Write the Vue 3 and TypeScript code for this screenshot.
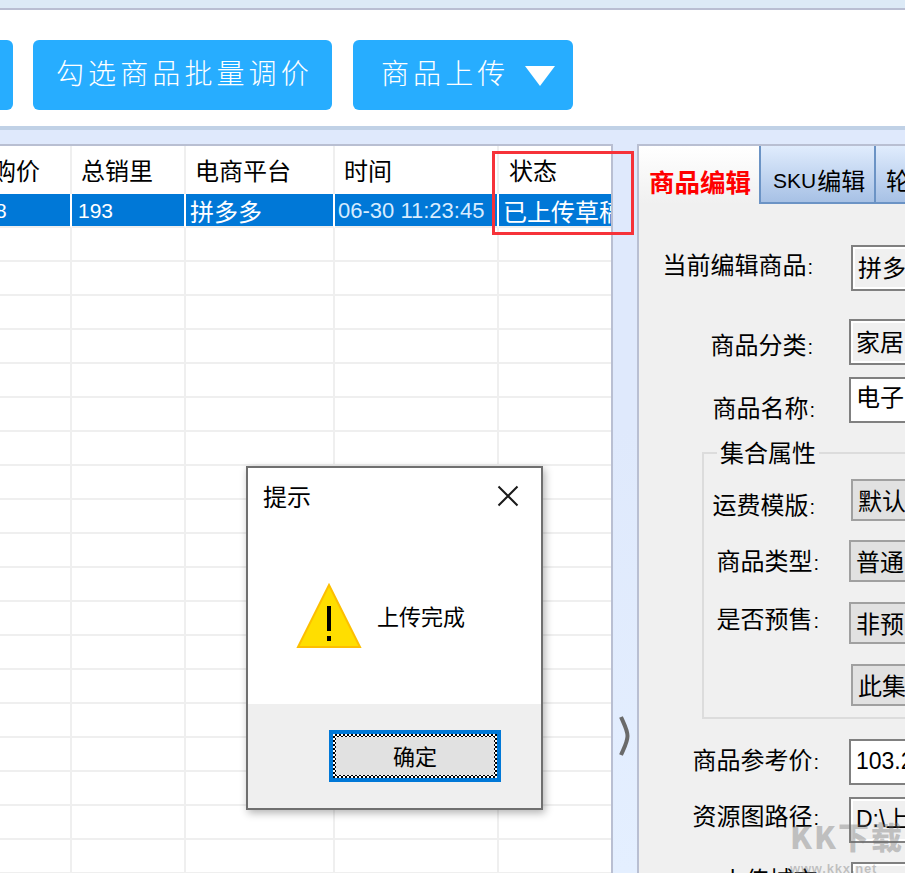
<script setup lang="ts">
const rowCount = 19
const rows = Array.from({ length: rowCount }, (_, i) => i)
const cols = ['c1', 'c2', 'c3', 'c4', 'c5']
</script>

<template>
  <div class="page">
    <div class="strip"></div>
    <div class="toolbar">
      <div class="tbtn first"></div>
      <div class="tbtn second">勾选商品批量调价</div>
      <div class="tbtn third">
        <span>商品上传</span>
        <svg class="tri" width="30" height="20" viewBox="0 0 30 20"><path d="M0 0H30L15 20Z" fill="#fff" /></svg>
      </div>
    </div>
    <div class="main">
      <div class="table">
        <div class="tr head">
          <div class="td c1"><span class="clip-head">购价</span></div>
          <div class="td c2">总销里</div>
          <div class="td c3">电商平台</div>
          <div class="td c4">时间</div>
          <div class="td c5 state">状态</div>
        </div>
        <div class="tr sel">
          <div class="td c1"><span class="clip-num">8</span></div>
          <div class="td c2 num">193</div>
          <div class="td c3">拼多多</div>
          <div class="td c4 num time">06-30 11:23:45</div>
          <div class="td c5 tight">已上传草稿</div>
        </div>
        <div v-for="r in rows" :key="r" class="tr body">
          <div v-for="c in cols" :key="c" class="td" :class="c"></div>
        </div>
      </div>
      <div class="splitter">
        <svg class="chev" width="11" height="40" viewBox="0 0 11 40"><path d="M2 1C5 8 8.500 14 8.500 20C8.500 26 5 32 2 39" fill="none" stroke="#6a6a6a" stroke-width="4" /></svg>
      </div>
      <div class="panel">
        <div class="tabs">
          <div class="tab active">商品编辑</div>
          <div class="tab sku"><span class="latin">SKU</span>编辑</div>
          <div class="tab more">轮播图</div>
        </div>
        <div class="form">
          <div class="row r-current"><span class="lab">当前编辑商品<i>:</i></span><div class="box gray">拼多多</div></div>
          <div class="row r-cat"><span class="lab">商品分类<i>:</i></span><div class="box gray">家居</div></div>
          <div class="row r-name"><span class="lab">商品名称<i>:</i></span><div class="box white top">电子</div></div>
          <div class="group">
            <div class="legend">集合属性</div>
            <div class="row r-a"><span class="lab">运费模版<i>:</i></span><div class="box sel-box">默认</div></div>
            <div class="row r-b"><span class="lab">商品类型<i>:</i></span><div class="box sel-box">普通</div></div>
            <div class="row r-c"><span class="lab">是否预售<i>:</i></span><div class="box sel-box">非预</div></div>
            <div class="row r-d"><div class="box sel-box">此集</div></div>
          </div>
          <div class="row r-price"><span class="lab">商品参考价<i>:</i></span><div class="box white digits">103.2</div></div>
          <div class="row r-path"><span class="lab">资源图路径<i>:</i></span><div class="box gray digits">D:\上</div></div>
          <div class="row r-city"><span class="lab">上传城市<i>:</i></span><div class="box gray">上</div></div>
        </div>
      </div>
    </div>

    <div class="redbox"></div>

    <div class="dialog">
      <div class="dlg-top">
        <div class="dlg-title">
          <span>提示</span>
          <svg width="22" height="22" viewBox="0 0 22 22"><path d="M1.500 1.500L20.500 20.500M20.500 1.500L1.500 20.500" stroke="#1a1a1a" stroke-width="2" fill="none" /></svg>
        </div>
        <div class="dlg-msg">
          <svg class="warn" width="66" height="66" viewBox="0 0 66 66">
            <path d="M33 2L64 64H2Z" fill="#ffde00" stroke="#fdbf00" stroke-width="2" />
            <rect x="31" y="23" width="4" height="25" fill="#000" />
            <rect x="31" y="53" width="4" height="5" fill="#000" />
          </svg>
          <span>上传完成</span>
        </div>
      </div>
      <div class="dlg-foot">
        <div class="ok"><div class="ok-in">确定</div></div>
      </div>
    </div>

    <div class="mark">
      <div class="mark-big">KK下载</div>
      <div class="mark-small">www.kkx.net</div>
    </div>
  </div>
</template>

<style>
html, body { margin: 0; background: #fff; overflow: hidden; }
</style>

<style scoped>
.page {
  position: relative;
  width: 905px;
  height: 873px;
  overflow: hidden;
  display: flex;
  flex-direction: column;
  background: #dfe9fc;
  font-family: "Noto Sans CJK SC", "Liberation Sans", sans-serif;
  color: #000;
}
.strip {
  height: 8px;
  background: #dceaf6;
  border-bottom: 2px solid #b9bed2;
  flex: none;
}
.toolbar {
  height: 120px;
  flex: none;
  background: #fff;
  border-bottom: 4px solid #c0d1e6;
  display: flex;
  align-items: flex-start;
  padding-top: 30px;
  box-sizing: border-box;
}
.tbtn {
  height: 70px;
  background: #27adff;
  color: #fff;
  border-radius: 6px;
  font-size: 28px;
  letter-spacing: 4.100px;
  display: flex;
  align-items: center;
  flex: none;
  font-weight: 300;
  line-height: 1;
  padding-bottom: 7px;
  box-sizing: border-box;
}
.first { width: 13px; border-radius: 0 6px 6px 0; }
.second { width: 299px; margin-left: 20px; padding-left: 23px; }
.third { width: 220px; margin-left: 21px; padding-left: 28px; }
.tri { margin-left: 16px; margin-top: 9px; }
.main {
  flex: 1;
  min-height: 0;
  display: flex;
  padding-top: 14px;
}
.table {
  width: 613px;
  flex: none;
  background: #fff;
  border-top: 2px solid #b9bfd2;
  border-right: 2px solid #b9bfd2;
  box-sizing: border-box;
  overflow: hidden;
}
.tr { display: grid; grid-template-columns: 72px 114px 149px 164px 112px; }
.head { height: 48px; }
.sel { height: 34px; }
.body { height: 34px; }
.td {
  box-sizing: border-box;
  border-right: 2px solid #efefef;
  border-bottom: 2px solid #efefef;
  white-space: nowrap;
  overflow: hidden;
  font-size: 24px;
  line-height: 34px;
}
.c5 { border-right: none; }
.head .td {
  border-bottom: none;
  padding-top: 7px;
  padding-left: 9px;
  line-height: 34px;
}
.head .c1 { padding-left: 0; }
.clip-head { display: block; margin-left: -8px; }
.head .state { padding-left: 10px; }
.sel .td {
  background: #0078d7;
  color: #fff;
  border-right-color: #fff;
  border-bottom-color: #efefef;
  padding-left: 4px;
  height: 34px;
  line-height: 30px;
}
.sel .c1 { padding-left: 0; }
.clip-num { display: block; margin-left: -5px; font-family: "Liberation Sans", sans-serif; font-size: 21px; line-height: 34px; }
.sel .c3, .sel .c5 { line-height: 34px; }
.sel .num { font-family: "Liberation Sans", sans-serif; font-size: 21px; padding-left: 6px; line-height: 34px; }
.sel .time { font-size: 22px; padding-left: 3px; color: #d7ecff; }
.sel .tight { padding-left: 4px; }
.splitter {
  width: 24px;
  flex: none;
  background: linear-gradient(180deg, #dfe9fc 0%, #dfe9fc 40%, #e4efff 100%);
  position: relative;
  margin-top: -14px;
  padding-top: 14px;
  display: flex;
  flex-direction: column;
  justify-content: flex-end;
  padding-bottom: 117px;
  box-sizing: border-box;
}
.chev { margin-left: 6px; }
.panel {
  flex: 1;
  min-width: 0;
  background: #f0f0f0;
  border-top: 2px solid #b9bfd2;
  border-left: 2px solid #b9bfd2;
  display: flex;
  flex-direction: column;
  overflow: hidden;
}
.tabs { display: flex; height: 58px; flex: none; }
.tab {
  flex: none;
  font-size: 24px;
  line-height: 1;
  display: flex;
  align-items: center;
  white-space: nowrap;
  box-sizing: border-box;
  padding-top: 12px;
}
.active {
  width: 120px;
  font-weight: 700;
  font-size: 25.500px;
  color: #f00;
  background: linear-gradient(180deg, #fff 0%, #f0f0f0 100%);
  padding-left: 10px;
}
.sku, .more {
  background: linear-gradient(180deg, #e0ecfd 0%, #a7c1e5 100%);
  border-left: 2px solid #6b93c5;
  border-bottom: 2px solid #6b93c5;
}
.sku { width: 115px; padding-left: 12px; }
.latin { font-family: "Liberation Sans", sans-serif; font-size: 21px; margin-right: 1px; }
.more { width: 200px; padding-left: 10px; }
.form { flex: none; }
.row { display: flex; align-items: flex-start; position: relative; }
.lab {
  flex: none;
  font-size: 24px;
  line-height: 30px;
  text-align: right;
  white-space: nowrap;
}
.lab i { font-style: normal; font-family: "Liberation Sans", sans-serif; font-size: 20px; margin-left: 1px; }
.box {
  flex: none;
  width: 120px;
  box-sizing: border-box;
  font-size: 24px;
  line-height: 30px;
  padding-left: 5px;
  white-space: nowrap;
  overflow: hidden;
}
.gray { background: #f0f0f0; border: 2px solid #808080; box-shadow: inset 0 0 0 2px #fff; height: 46px; padding-top: 5px; }
.white { background: #fff; border: 2px solid #808080; height: 46px; padding-top: 5px; }
.top { padding-top: 2px; }
.sel-box { background: #e1e1e1; border: 2px solid #a0a0a0; height: 42px; padding-top: 4px; }
.digits { font-family: "Liberation Sans", "Noto Sans CJK SC", sans-serif; font-size: 23px; }

.r-current { margin-top: 41px; margin-left: 22px; }
.r-current .lab { width: 152px; margin-top: 4px; }
.r-current .box { margin-left: 38px; }
.r-cat { margin-top: 28px; margin-left: 70px; }
.r-cat .lab { width: 104px; margin-top: 10px; }
.r-cat .box { margin-left: 36px; }
.r-name { margin-top: 12px; margin-left: 72px; }
.r-name .lab { width: 104px; margin-top: 15px; }
.r-name .box { margin-left: 34px; }

.group {
  margin: 27px 0 0 63px;
  height: 267px;
  width: 260px;
  box-sizing: border-box;
  border: 2px solid #dcdcdc;
  position: relative;
  padding-top: 25px;
}
.legend {
  position: absolute;
  left: 13px;
  top: -17px;
  background: #f0f0f0;
  padding: 0 3px;
  font-size: 24px;
  line-height: 30px;
}
.r-a { margin-left: 7px; }
.r-a .lab { width: 104px; margin-top: 10px; }
.r-a .box { margin-left: 36px; }
.r-b { margin-top: 18px; margin-left: 11px; }
.r-b .lab { width: 104px; margin-top: 5px; }
.r-b .box { margin-left: 30px; }
.r-c { margin-top: 20px; margin-left: 11px; }
.r-c .lab { width: 104px; margin-top: 1px; }
.r-c .box { margin-left: 30px; }
.r-d { margin-top: 20px; margin-left: 147px; }

.r-price { margin-top: 20px; margin-left: 52px; }
.r-price .lab { width: 128px; margin-top: 5px; }
.r-price .box { margin-left: 30px; }
.r-path { margin-top: 12px; margin-left: 52px; }
.r-path .lab { width: 128px; margin-top: 3px; }
.r-path .box { margin-left: 30px; }
.r-city { margin-top: 19px; margin-left: 81px; }
.r-city .lab { width: 104px; margin-top: 2px; }
.r-city .box { margin-left: 27px; }

.redbox {
  position: absolute;
  left: 492px;
  top: 151px;
  width: 142px;
  height: 84px;
  box-sizing: border-box;
  border: 3px solid #f63239;
  pointer-events: none;
}
.dialog {
  position: absolute;
  left: 246px;
  top: 466px;
  width: 297px;
  height: 344px;
  box-sizing: border-box;
  border: 2px solid #6f6f6f;
  background: #fff;
  box-shadow: 2px 3px 8px rgba(0, 0, 0, 0.3);
  display: flex;
  flex-direction: column;
}
.dlg-top { flex: 1; display: flex; flex-direction: column; }
.dlg-title {
  display: flex;
  justify-content: space-between;
  padding: 12px 22px 0 15px;
  font-size: 24px;
  line-height: 32px;
  height: 60px;
  box-sizing: border-box;
}
.dlg-title svg { margin-top: 5px; }
.dlg-msg {
  display: flex;
  align-items: flex-start;
  padding: 55px 0 0 48px;
  font-size: 22px;
  line-height: 30px;
}
.dlg-msg span { margin: 17px 0 0 15px; }
.dlg-foot {
  height: 104px;
  flex: none;
  background: #efefef;
  padding: 26px 0 0 81px;
  box-sizing: border-box;
}
.ok {
  width: 172px;
  height: 52px;
  box-sizing: border-box;
  border: 4px solid #0078d7;
  background: #e1e1e1;
}
.ok-in {
  height: 100%;
  box-sizing: border-box;
  border: 3px solid transparent;
  background: linear-gradient(#e1e1e1, #e1e1e1) padding-box, repeating-conic-gradient(#000 0 25%, #fff 0 50%) 0 0 / 4px 4px border-box;
  text-align: center;
  font-size: 22px;
  line-height: 36px;
}
.mark {
  position: absolute;
  left: 790px;
  top: 816px;
  width: 115px;
  overflow: hidden;
  color: rgba(110, 110, 110, 0.38);
  pointer-events: none;
}
.mark-big { font-size: 31px; font-weight: 900; line-height: 40px; letter-spacing: 2px; white-space: nowrap; font-family: "Noto Sans CJK SC", sans-serif; }
.mark-small { font-size: 13px; font-weight: 700; line-height: 16px; letter-spacing: 0.800px; margin-top: 5px; white-space: nowrap; font-family: "Liberation Sans", sans-serif; }
</style>
